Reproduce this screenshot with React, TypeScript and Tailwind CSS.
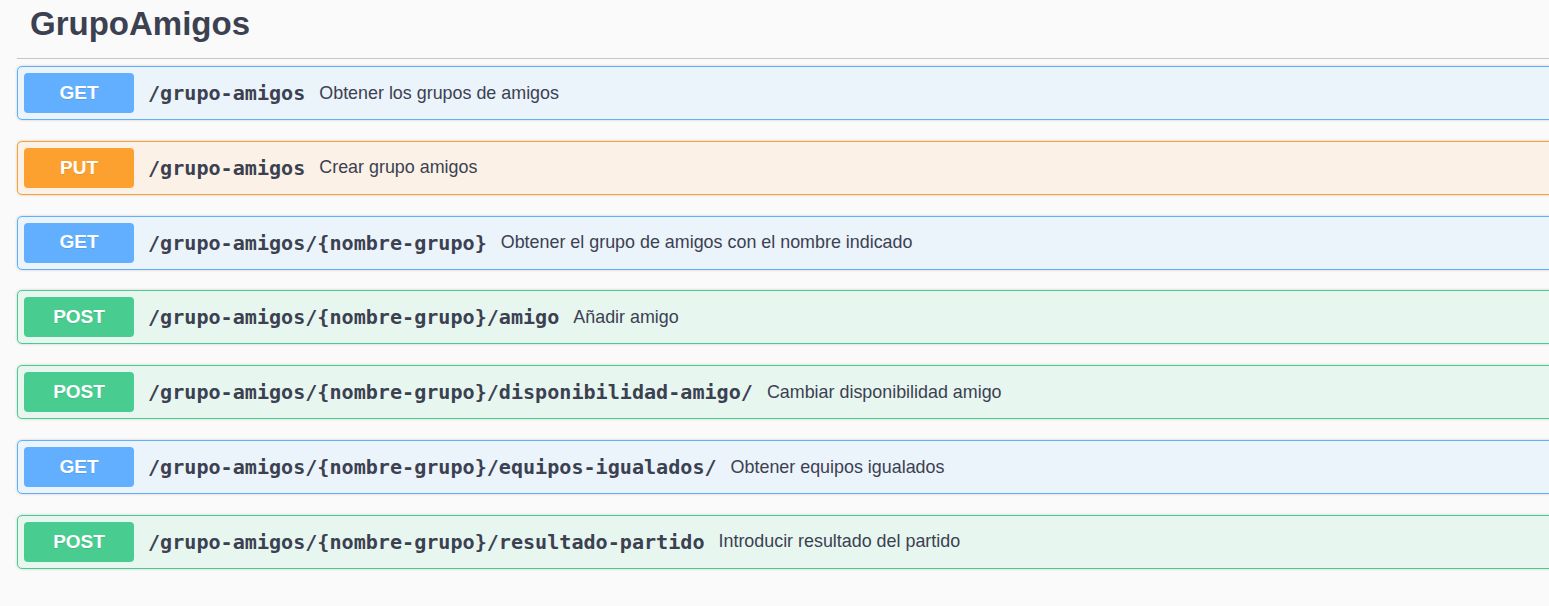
// Swagger-style tag section: GrupoAmigos endpoints

import React from "react";

type Method = "GET" | "PUT" | "POST";

type Endpoint = {
  method: Method;
  path: string;
  summary: string;
};

const endpoints: Endpoint[] = [
  { method: "GET", path: "/grupo-amigos", summary: "Obtener los grupos de amigos" },
  { method: "PUT", path: "/grupo-amigos", summary: "Crear grupo amigos" },
  {
    method: "GET",
    path: "/grupo-amigos/{nombre-grupo}",
    summary: "Obtener el grupo de amigos con el nombre indicado",
  },
  { method: "POST", path: "/grupo-amigos/{nombre-grupo}/amigo", summary: "Añadir amigo" },
  {
    method: "POST",
    path: "/grupo-amigos/{nombre-grupo}/disponibilidad-amigo/",
    summary: "Cambiar disponibilidad amigo",
  },
  {
    method: "GET",
    path: "/grupo-amigos/{nombre-grupo}/equipos-igualados/",
    summary: "Obtener equipos igualados",
  },
  {
    method: "POST",
    path: "/grupo-amigos/{nombre-grupo}/resultado-partido",
    summary: "Introducir resultado del partido",
  },
];

const blockStyles: Record<Method, { box: string; badge: string }> = {
  GET: { box: "bg-[#ebf3fb] border-[#61affe]", badge: "bg-[#61affe]" },
  PUT: { box: "bg-[#fbf1e6] border-[#fca130]", badge: "bg-[#fca130]" },
  POST: { box: "bg-[#e8f6f0] border-[#49cc90]", badge: "bg-[#49cc90]" },
};

const Opblock: React.FC<{ endpoint: Endpoint }> = ({ endpoint }) => {
  const s = blockStyles[endpoint.method];
  return (
    <div
      className={`mb-[20.8px] flex h-[54px] items-center rounded-[5px] border p-[6px] shadow-[0_0_3px_rgba(0,0,0,0.19)] ${s.box}`}
    >
      <span
        className={`flex h-[40px] w-[110px] shrink-0 items-center justify-center rounded-[4px] font-['Liberation_Sans',Arial,sans-serif] text-[19px] font-bold text-white [text-shadow:0_1px_0_rgba(0,0,0,0.1)] ${s.badge}`}
      >
        {endpoint.method}
      </span>
      <span className="whitespace-nowrap pl-[14px] pr-[14px] font-['DejaVu_Sans_Mono',monospace] text-[20.1px] font-bold text-[#3b4151]">
        {endpoint.path}
      </span>
      <span className="whitespace-nowrap font-['Liberation_Sans',Arial,sans-serif] text-[17.9px] text-[#3b4151]">
        {endpoint.summary}
      </span>
    </div>
  );
};

export default function App() {
  return (
    <div className="min-h-[606px] w-full overflow-hidden bg-[#fafafa]">
      <div className="ml-[17px] mr-[-20px]">
        {/* Tag header */}
        <h3 className="border-b border-[#c4c5c8] pb-[14px] pl-[13px] pt-[4px] font-['Liberation_Sans',Arial,sans-serif] text-[33px] font-bold leading-[40px] text-[#3b4151]">
          GrupoAmigos
        </h3>

        {/* Operations */}
        <div className="pt-[7px]">
          {endpoints.map((ep, i) => (
            <Opblock key={i} endpoint={ep} />
          ))}
        </div>
      </div>
    </div>
  );
}
